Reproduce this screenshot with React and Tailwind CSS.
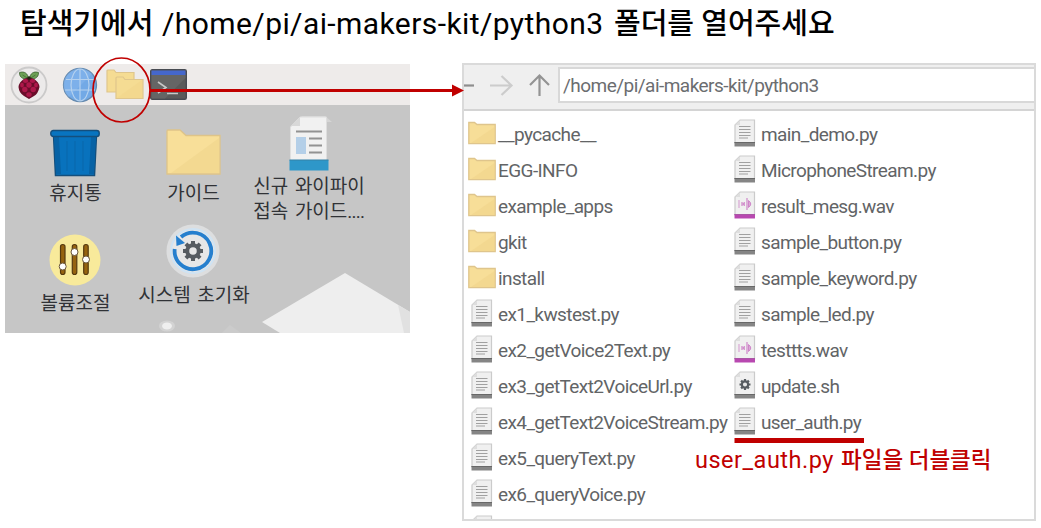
import React from "react";

const KR = "font-['Roboto','Noto_Sans_CJK_KR',sans-serif]";

function Raspberry() {
  return (
    <svg width="38" height="38" viewBox="0 0 38 38">
      <circle cx="19" cy="19" r="17.5" fill="#eceaea" stroke="#cbcaca" strokeWidth="1.8" />
      <path d="M18.5 13C15 14 9 12 9.5 6.5C14 5 18 7 18.5 13ZM19.5 13C23 14 29 12 28.500 6.500C24 5 20 7 19.500 13Z" fill="#6da055" stroke="#3e6134" strokeWidth=".8" />
      <path d="M12.500 9L18 12.500M25.500 9L20 12.500" stroke="#426b36" strokeWidth=".8" />
      <path d="M14 13Q19 10 24 13Q29 16 29.500 21Q28 28 24 30L19 33L14 30Q9 27 8.500 21Q9 16 14 13Z" fill="#6a0d2a" />
      <g fill="#ad174a">
        <ellipse cx="15.500" cy="15" rx="2.700" ry="2" />
        <ellipse cx="22.500" cy="15" rx="2.700" ry="2" />
        <circle cx="19" cy="19" r="2.700" />
        <ellipse cx="12" cy="19" rx="1.900" ry="2.500" />
        <ellipse cx="26" cy="19" rx="1.900" ry="2.500" />
        <circle cx="14.800" cy="23.500" r="2.700" />
        <circle cx="23.200" cy="23.500" r="2.700" />
        <ellipse cx="19" cy="28.500" rx="2.700" ry="2.300" />
      </g>
      <circle cx="19" cy="12" r="1.700" fill="#221" />
    </svg>
  );
}

function Globe() {
  return (
    <svg width="36" height="36" viewBox="0 0 36 36">
      <circle cx="18" cy="18" r="16.500" fill="#72a9e6" stroke="#668aae" strokeWidth="1.300" />
      <path d="M6 7A16 16 0 0 1 30 7L7 30A16 16 0 0 1 6 7Z" fill="#86b5ec" opacity=".6" />
      <g fill="none" stroke="#b5d1ee" strokeWidth="1.200">
        <path d="M18 2V34M4 12.500H32M3 23H33" />
        <ellipse cx="18" cy="18" rx="9" ry="16" />
      </g>
    </svg>
  );
}

function Folders() {
  return (
    <svg width="38" height="32" viewBox="0 0 38 32">
      <g fill="#f5dc93" stroke="#dfc68c" strokeWidth="1.200">
        <path d="M1 2Q1 1 2 1H8L10 3.500H28V23H1Z" />
        <path d="M10 9Q10 8 11 8H17L19 10.500H37V29.500H10Z" />
      </g>
      <path d="M11 29L36 11V29Z" fill="#efd287" opacity=".4" />
    </svg>
  );
}

function Terminal() {
  return (
    <svg width="37" height="31" viewBox="0 0 37 31">
      <rect x=".7" y=".7" width="35.600" height="29.600" rx="1.500" fill="#5a5a5a" stroke="#484b52" strokeWidth="1.400" />
      <path d="M1.500 6H35.500V9L15 29.500H1.500Z" fill="#656565" />
      <path d="M1.500 1.500H35.500V6H1.500Z" fill="#4567cc" />
      <path d="M8 13L16 18.500L8 24M17 24.500H28" fill="none" stroke="#c8c8c8" strokeWidth="1.600" />
    </svg>
  );
}

function Trash() {
  return (
    <svg width="50" height="48" viewBox="0 0 50 48">
      <path d="M3.500 6H46.500L44.500 46.500H5.500Z" fill="#0872bd" stroke="#144f7d" strokeWidth="1.500" />
      <path d="M4 7H9L11 45H6ZM46 7H41L39 45H44Z" fill="#0762a5" />
      <path d="M17 12V42M25 12V43M33 12V42" stroke="#0969ad" strokeWidth="1.200" />
      <rect x=".8" y="1.500" width="48.400" height="6" rx="2.500" fill="#0874c0" stroke="#144f7d" strokeWidth="1.400" />
    </svg>
  );
}

function BigFolder() {
  return (
    <svg width="55" height="46" viewBox="0 0 55 46">
      <path d="M1 2Q1 1 2 1H14L20 6.500H54V45H1Z" fill="#f8df99" stroke="#dec489" strokeWidth="1.300" />
      <path d="M5 44L53 9V44Z" fill="#f0d68e" opacity=".65" />
    </svg>
  );
}

function Guide() {
  return (
    <svg width="40" height="55" viewBox="0 0 40 55">
      <path d="M11 1H37.500V46H1.500V11Z" fill="#f1f1f1" stroke="#dedede" />
      <path d="M11 1V10H2Z" fill="#d8d8d8" />
      <path d="M7 15.500H33M20 22.500H33M20 29.500H33M20 36.500H33" stroke="#929292" strokeWidth="2.200" />
      <path d="M7 21H17V38H7Z" fill="#b4cfe8" />
      <path d="M.5 44H39.500V54.500H.5Z" fill="#2e97c9" />
      <path d="M.5 44H39.500" stroke="#3581a6" />
    </svg>
  );
}

function Volume() {
  return (
    <svg width="52" height="52" viewBox="0 0 52 52">
      <circle cx="26" cy="26" r="25.500" fill="#f8ea9b" />
      <g fill="#966310" stroke="#563a10" strokeWidth="1.200">
        <rect x="11.500" y="10.500" width="4.500" height="30" rx="2.200" />
        <rect x="23.300" y="10.500" width="4.500" height="30" rx="2.200" />
        <rect x="34.700" y="10.500" width="4.500" height="30" rx="2.200" />
      </g>
      <g fill="#fff" stroke="#6b573b" strokeWidth="1">
        <circle cx="13.700" cy="32.500" r="3.500" />
        <circle cx="25.500" cy="18" r="3.500" />
        <circle cx="37" cy="25.500" r="3.500" />
      </g>
    </svg>
  );
}

function Gear({ r = 8 }) {
  return (
    <g>
      <g stroke="#575c61" strokeWidth={r * 0.5}>
        <path d={`M0 ${-r * 1.25}V${r * 1.25}M${-r * 1.25} 0H${r * 1.25}`} />
        <path d={`M0 ${-r * 1.25}V${r * 1.25}M${-r * 1.25} 0H${r * 1.25}`} transform="rotate(45)" />
      </g>
      <circle r={r * 0.72} fill="#e7e7e7" stroke="#575c61" strokeWidth={r * 0.5} />
    </g>
  );
}

function Reset() {
  return (
    <svg width="54" height="54" viewBox="0 0 54 54">
      <circle cx="27" cy="27" r="26.500" fill="#dddedf" />
      <circle cx="27" cy="27" r="22" fill="#e7e7e7" stroke="#cfe3f3" strokeWidth="2" />
      <path d="M8.700 25A18.300 18.300 0 1 0 15 13" fill="none" stroke="#257fce" strokeWidth="3.800" />
      <path d="M10 11.500L10.500 22L19 19Z" fill="#257fce" />
      <g transform="translate(27 27)">
        <Gear r={8} />
      </g>
    </svg>
  );
}

function FolderIcon() {
  return (
    <svg width="28" height="24" viewBox="0 0 28 24">
      <path d="M.8 1.500H6.500L9 3.500H27.200V22.700H.8Z" fill="#f7de98" stroke="#dfc58c" strokeWidth="1.300" />
      <path d="M3 22L26.500 6V22Z" fill="#f0d48b" opacity=".6" />
    </svg>
  );
}

function FileIcon({ kind }) {
  const wav = kind === "wav";
  return (
    <svg width="22" height="28" viewBox="0 0 22 28">
      <path d="M6 1H20.500V24H1V6Z" fill="#f0f0f0" stroke="#cbcbcb" strokeWidth="1.200" />
      <path d="M6 1V6H1Z" fill="#dedede" />
      <path d="M.500 23H21V27.500H.500Z" fill={wav ? "#b848b0" : "#858585"} />
      <path d="M.500 23.500H21" stroke={wav ? "#a957a4" : "#686868"} />
      {kind === "text" && <path d="M5 7.500H16.500M5 10.500H16.500M5 13.500H16.500M5 16.500H16.500M5 19H14" stroke="#a0a0a0" strokeWidth="1.200" />}
      {wav && (
        <g fill="none" stroke="#cf86c9" strokeWidth="1.200">
          <path d="M5 9V17" opacity=".7" />
          <path d="M8 11V15" />
          <path d="M10.500 11V15L8.500 13Z" fill="#cf86c9" strokeWidth=".6" />
          <path d="M13 7V19" />
          <path d="M14.500 9.500Q19 13 14.500 16.500Z" fill="#dbaad7" strokeWidth="1" />
        </g>
      )}
      {kind === "sh" && (
        <g transform="translate(11 13.500)">
          <Gear r={4.4} />
        </g>
      )}
    </svg>
  );
}

const left = [
  ["dir", "__pycache__"],
  ["dir", "EGG-INFO"],
  ["dir", "example_apps"],
  ["dir", "gkit"],
  ["dir", "install"],
  ["text", "ex1_kwstest.py"],
  ["text", "ex2_getVoice2Text.py"],
  ["text", "ex3_getText2VoiceUrl.py"],
  ["text", "ex4_getText2VoiceStream.py"],
  ["text", "ex5_queryText.py"],
  ["text", "ex6_queryVoice.py"],
  ["text", ""],
];
const right = [
  ["text", "main_demo.py"],
  ["text", "MicrophoneStream.py"],
  ["wav", "result_mesg.wav"],
  ["text", "sample_button.py"],
  ["text", "sample_keyword.py"],
  ["text", "sample_led.py"],
  ["wav", "testtts.wav"],
  ["sh", "update.sh"],
  ["text", "user_auth.py"],
];

function FileList({ items, className }) {
  return (
    <ul className={className}>
      {items.map(([kind, name], i) => (
        <li key={i} className="flex h-9 items-center whitespace-nowrap">
          <span className="flex w-[30px] shrink-0 justify-center pr-0.5">
            {kind === "dir" ? <FolderIcon /> : <FileIcon kind={kind} />}
          </span>
          <span className="pt-[3px] text-[19px] leading-6 tracking-[-0.6px] text-[#626466]">{name}</span>
        </li>
      ))}
    </ul>
  );
}

function DesktopItem({ icon, className, children }) {
  return (
    <div className={`flex flex-col items-center whitespace-nowrap text-center text-[19px] leading-[25px] text-[#303236] [word-spacing:2px] ${className}`}>
      {icon}
      {children}
    </div>
  );
}

function Desktop() {
  return (
    <section className="relative mt-px flex h-[269px] w-[405px] flex-col overflow-hidden bg-[#c6c6c6]">
      <div className="flex h-[41px] shrink-0 items-center bg-[#eeebea]">
        <div className="ml-[5px]"><Raspberry /></div>
        <div className="ml-[14px]"><Globe /></div>
        <div className="ml-[8px]"><Folders /></div>
        <div className="ml-[6px]"><Terminal /></div>
      </div>
      <svg className="absolute left-0 top-[41px]" width="405" height="228" viewBox="5 105 405 228">
        <path d="M262 322L345 273L410 312V333H280Z" fill="#eeeeee" />
        <path d="M398 305L410 312V333H404Z" fill="#e1e1e1" />
        <path d="M302 116H325L332 122H296Z" fill="#dfdfdf" opacity=".6" />
        <ellipse cx="167" cy="326" rx="8" ry="5.500" fill="#d3d3d3" />
        <ellipse cx="167" cy="326" rx="5" ry="3.500" fill="#efefef" />
        <path d="M222 333L230 325L241 333Z" fill="#cbcbcb" />
      </svg>
      <div className="relative grid grid-cols-[118px_118px_114px] grid-rows-[119px_109px] pl-[11px]">
        <DesktopItem icon={<Trash />} className="pt-[24px]"><span className="pt-1 pl-px">휴지통</span></DesktopItem>
        <DesktopItem icon={<BigFolder />} className="pt-[24px]"><span className="pt-[6px] pl-px">가이드</span></DesktopItem>
        <DesktopItem icon={<Guide />} className="pt-[11px]">
          <span className="pt-[3px] text-left">신규 와이파이<br />접속 가이드<span className="tracking-[-0.8px]">....</span></span>
        </DesktopItem>
        <DesktopItem icon={<Volume />} className="pt-[10px]"><span className="pt-[5px] pl-px">볼륨조절</span></DesktopItem>
        <DesktopItem icon={<Reset />} className="pt-0"><span className="pt-[5px] pl-0.5">시스템 초기화</span></DesktopItem>
      </div>
    </section>
  );
}

function FileWindow() {
  return (
    <section className="ml-[52px] flex h-[458px] w-[574px] flex-col overflow-hidden border-2 border-[#dadada] bg-white">
      <div className="flex h-[46px] shrink-0 items-center border-b-2 border-[#d4d4d4] bg-[#efefef]">
        <svg width="94" height="44" viewBox="464 65 94 44" fill="none" strokeWidth="2.200">
          <path d="M464 85.500H474" stroke="#8e8e8e" />
          <path d="M490 85.500H511M501.500 76L511.500 85.500L501.500 95" stroke="#cccccc" />
          <path d="M539.500 96V76M530 85L539.500 75.500L549 85" stroke="#939393" />
        </svg>
        <div className="mb-1 flex h-[36px] flex-1 items-center border-2 border-r-0 border-[#d8d8d8] bg-white pl-[3px] pt-0.5 text-[19px] tracking-[-0.53px] text-[#6b6d70]">
          <span>/home/pi/ai-makers-kit/python3</span>
        </div>
      </div>
      <div className="flex pl-1 pt-1">
        <FileList items={left} className="w-[263px]" />
        <FileList items={right} />
      </div>
    </section>
  );
}

export default function App() {
  return (
    <main className={`relative h-[528px] w-[1041px] overflow-hidden bg-white ${KR}`}>
      <h1 className="flex h-[63px] items-start whitespace-pre pl-[20px] pt-[5px] text-[29px] font-medium leading-[38px] text-black">
        <span className="w-[142px]">탐색기에서</span>
        <span className="w-[452px] text-[30px] font-normal tracking-[0.42px]">/home/pi/ai-makers-kit/python3</span>
        <span>폴더를 열어주세요</span>
      </h1>
      <div className="flex items-start pl-[5px]">
        <Desktop />
        <FileWindow />
      </div>
      <svg className="absolute left-0 top-0" width="1041" height="528">
        <ellipse cx="121.500" cy="90" rx="28.500" ry="32" fill="none" stroke="#c00000" strokeWidth="1.700" />
        <path d="M150 90.500H454" stroke="#c00000" strokeWidth="3" />
        <path d="M452 84.500L464 90.500L452 96.500Z" fill="#c00000" />
        <path d="M734.500 440.500H864" stroke="#c00000" strokeWidth="5" />
      </svg>
      <p className="absolute left-[695px] top-[445px] flex whitespace-pre text-[22.5px] font-medium leading-[30px] text-[#c00000]">
        <span className="w-[146px] text-[23.5px] font-normal tracking-[0.5px]">user_auth.py</span>
        <span>파일을 더블클릭</span>
      </p>
    </main>
  );
}
